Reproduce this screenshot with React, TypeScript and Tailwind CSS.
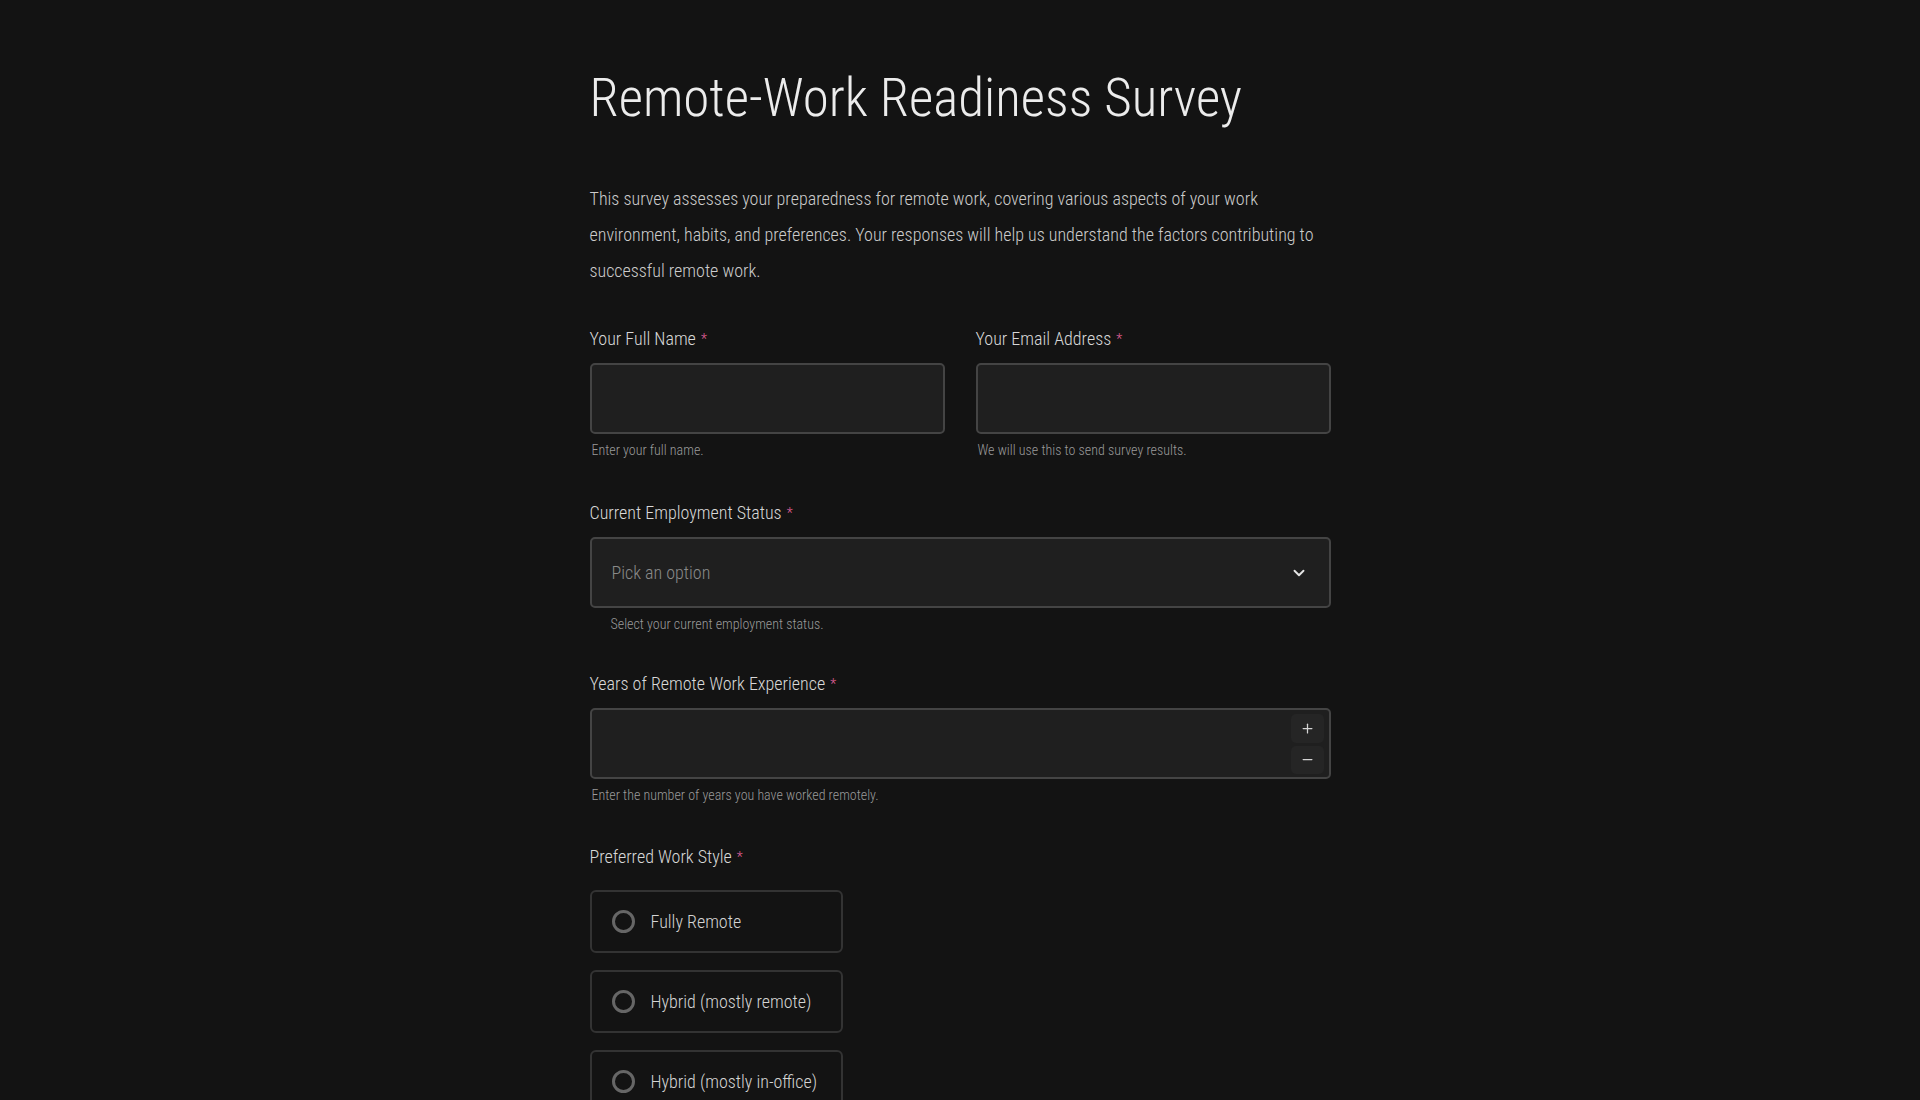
import { ChevronDown, Plus, Minus } from 'lucide-react';

const FONT = "font-['Roboto_Condensed','DejaVu_Sans_Condensed','DejaVu_Sans',sans-serif] font-stretch-condensed font-light";

function Label({ children }: { children: React.ReactNode }) {
  return (
    <label className="flex items-center text-[18px] leading-[28px] text-[#d8d8d8]">
      {children}
      <span className="ml-[5px] text-[14px] text-[#e0609a]">*</span>
    </label>
  );
}

function Helper({ children, indent }: { children: React.ReactNode; indent?: boolean }) {
  return (
    <p className={`mt-[6px] text-[14px] leading-[20px] text-[#9a9a9a] ${indent ? 'pl-[21px]' : 'pl-[2px]'}`}>
      {children}
    </p>
  );
}

const fieldBox =
  'h-[71px] w-full rounded-[5px] border-2 border-[#444444] bg-[#1f1f1f] text-[18px] text-[#d4d4d4] outline-none';

export default function App() {
  const styles = ['Fully Remote', 'Hybrid (mostly remote)', 'Hybrid (mostly in-office)'];

  return (
    <div className={`min-h-screen bg-[#131313] ${FONT}`}>
      <div className="mx-auto w-[741px] pt-[62px] pb-20">
        <h1 className="whitespace-nowrap text-[53px] leading-[72px] text-[#ececec]">Remote-Work Readiness Survey</h1>

        <p className="mt-[47px] text-[18px] leading-[36px] text-[#cccccc]">
          This survey assesses your preparedness for remote work, covering various aspects of your work environment,
          habits, and preferences. Your responses will help us understand the factors contributing to successful remote
          work.
        </p>

        {/* name + email */}
        <div className="mt-[36px] grid grid-cols-2 gap-[31px]">
          <div>
            <Label>Your Full Name</Label>
            <input className={`mt-[10px] px-4 ${fieldBox}`} />
            <Helper>Enter your full name.</Helper>
          </div>
          <div>
            <Label>Your Email Address</Label>
            <input className={`mt-[10px] px-4 ${fieldBox}`} />
            <Helper>We will use this to send survey results.</Helper>
          </div>
        </div>

        {/* employment status */}
        <div className="mt-[39px]">
          <Label>Current Employment Status</Label>
          <div className={`mt-[10px] flex items-center justify-between pl-[20px] pr-[21px] ${fieldBox}`}>
            <span className="text-[#8a8a8a]">Pick an option</span>
            <ChevronDown className="h-[18px] w-[18px] text-[#e5e5e5]" strokeWidth={2.5} />
          </div>
          <Helper indent>Select your current employment status.</Helper>
        </div>

        {/* years */}
        <div className="mt-[36px]">
          <Label>Years of Remote Work Experience</Label>
          <div className={`mt-[10px] flex items-center justify-between pl-4 pr-[5px] ${fieldBox}`}>
            <input className="flex-1 bg-transparent outline-none" />
            <div className="flex flex-col gap-[3px]">
              <button className="flex h-[29px] w-[33px] items-center justify-center rounded-[5px] bg-[#252525] text-[#d4d4d4]">
                <Plus className="h-[15px] w-[15px]" strokeWidth={2} />
              </button>
              <button className="flex h-[28px] w-[33px] items-center justify-center rounded-[5px] bg-[#252525] text-[#d4d4d4]">
                <Minus className="h-[15px] w-[15px]" strokeWidth={2} />
              </button>
            </div>
          </div>
          <Helper>Enter the number of years you have worked remotely.</Helper>
        </div>

        {/* work style */}
        <div className="mt-[38px]">
          <Label>Preferred Work Style</Label>
          <div className="mt-[19px] flex flex-col gap-[17px]">
            {styles.map((s) => (
              <label
                key={s}
                className="flex h-[63px] w-[253px] items-center gap-[16px] whitespace-nowrap rounded-[6px] border-2 border-[#333333] pl-[20px] text-[18px] text-[#d4d4d4]"
              >
                <span className="h-[23px] w-[23px] shrink-0 rounded-full border-[3px] border-[#666666]" />
                {s}
              </label>
            ))}
          </div>
        </div>
      </div>
    </div>
  );
}
